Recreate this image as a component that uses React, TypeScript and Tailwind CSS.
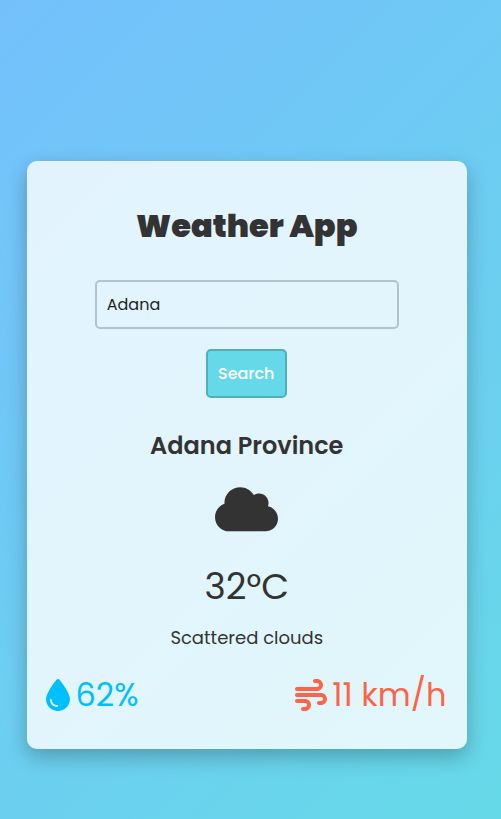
import { FaCloud, FaDroplet, FaWind } from "react-icons/fa6";

export default function App() {
  return (
    <div className="flex h-[819px] items-center justify-center bg-[linear-gradient(135deg,#74c0fc,#66d9e8)] pt-[91px] pr-[7px] font-[Poppins,'Open_Sans',sans-serif] text-[#333]">
      <main className="flex h-[588px] w-[440px] flex-col items-center rounded-[10px] bg-white/80 pr-[20px] pl-[19.5px] pt-[43px] shadow-[0_8px_20px_rgba(0,0,0,0.25)]">
        <h1 className="flex h-[44px] items-center text-[32px] font-black whitespace-nowrap">Weather App</h1>
        <input className="mt-8 h-[49px] w-[304px] rounded-[5px] border-2 border-[#b4c3ca] px-2.5 text-base text-[#222]" defaultValue="Adana" />
        <button className="mt-5 mr-px h-[49px] w-[81px] rounded-[5px] border-2 border-[#52aeba] bg-[#66d9e8] text-base font-medium text-white">Search</button>
        <h2 className="mt-[29px] flex h-[38px] items-center text-2xl font-semibold">Adana Province</h2>
        <FaCloud className="mt-[12.5px] mr-px h-[62.5px] w-[63px]" />
        <p className="mt-[27px] text-4xl">32°C</p>
        <p className="mt-[17px] text-lg">Scattered clouds</p>
        <div className="mt-[19px] -ml-px flex w-full justify-between text-[32px]">
          <span className="flex items-center gap-[5.5px] text-[#00bfff]"><FaDroplet className="h-8 w-6" />62%</span>
          <span className="flex items-center gap-[5px] text-[#ff6347]"><FaWind />11 km/h</span>
        </div>
      </main>
    </div>
  );
}
